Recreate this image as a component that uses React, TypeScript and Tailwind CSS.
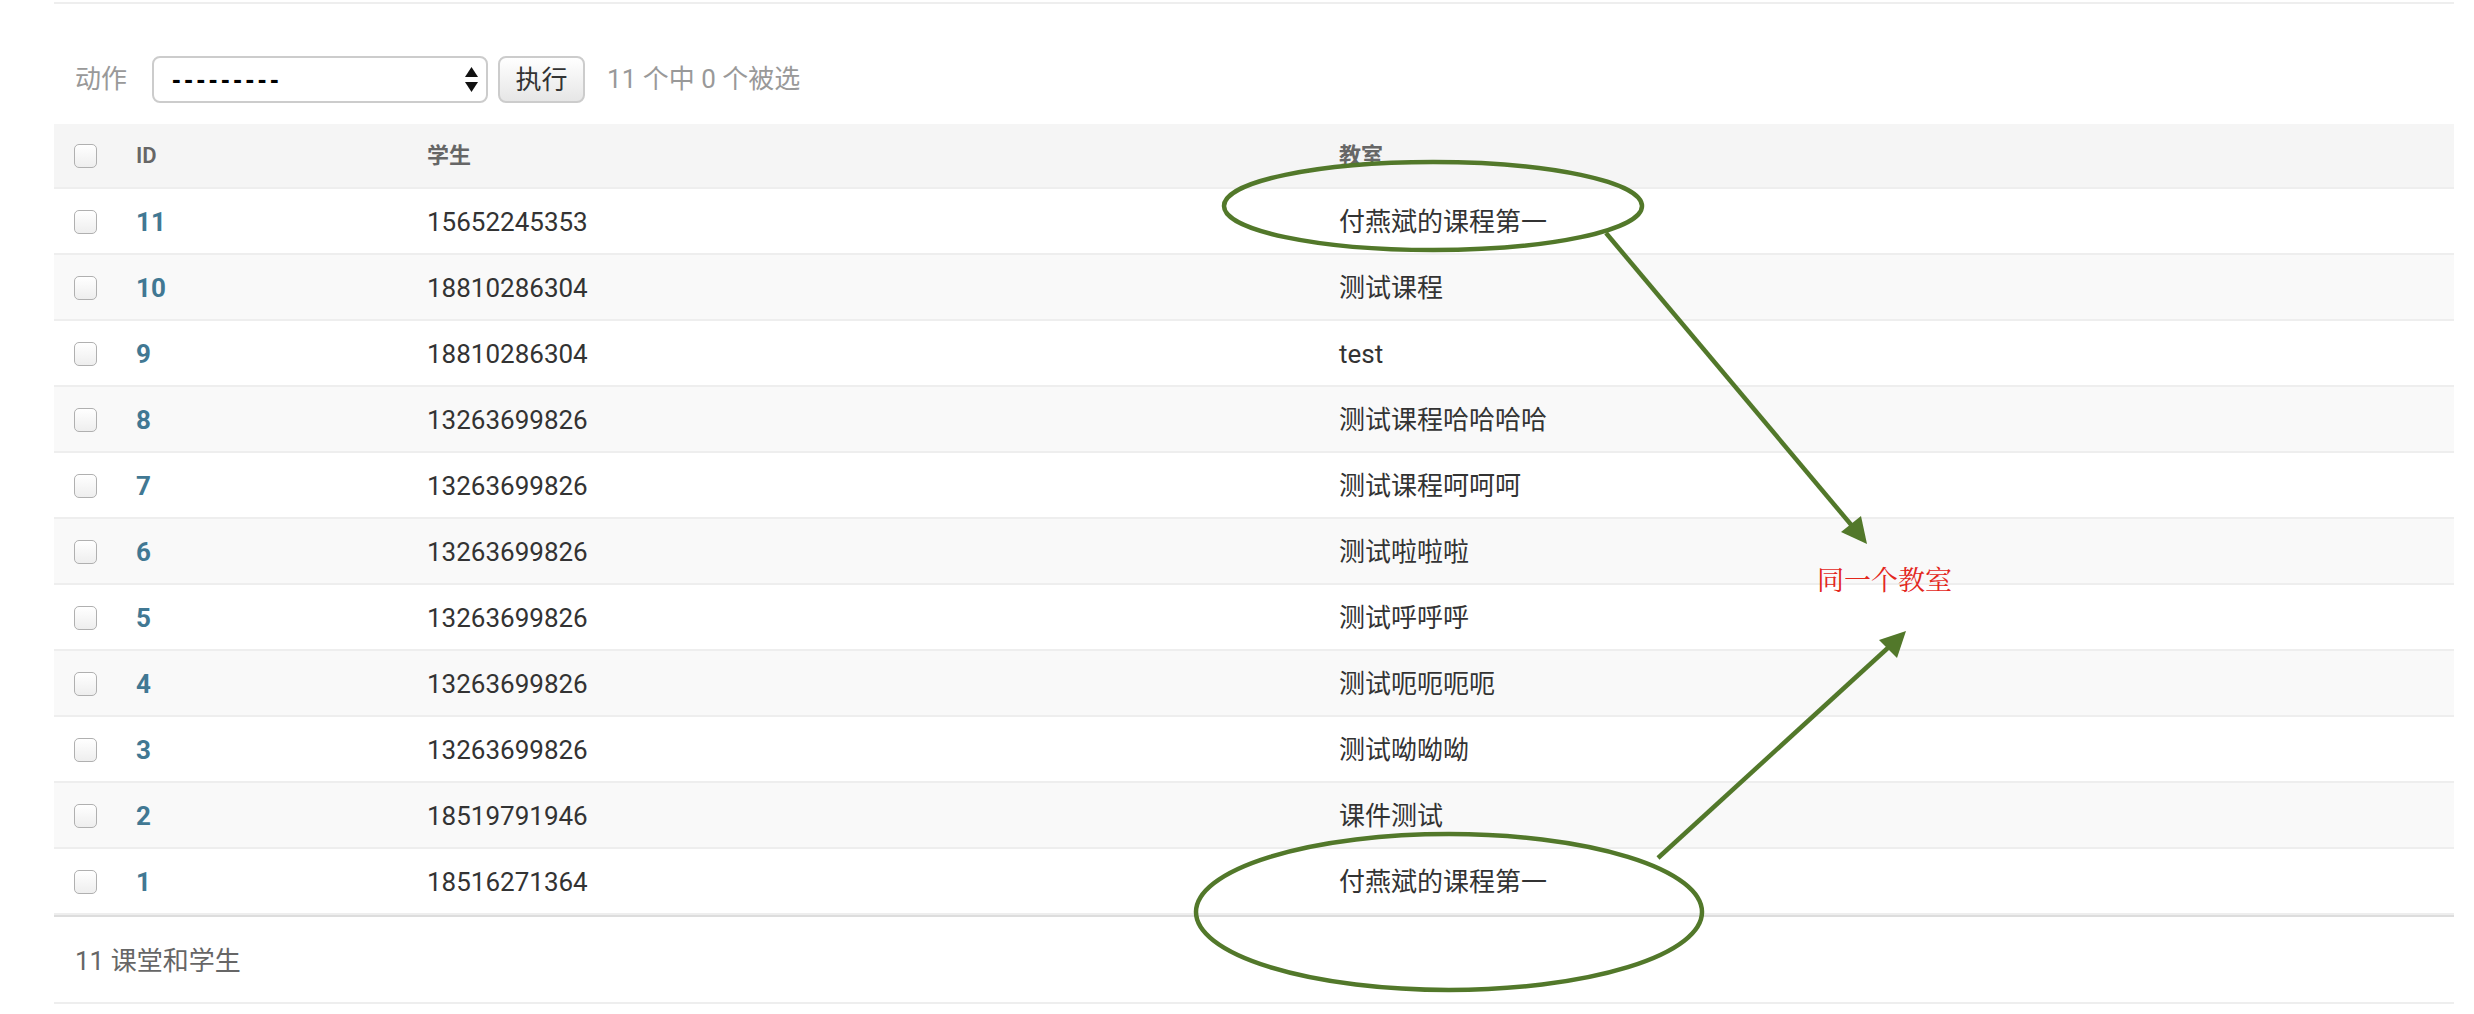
import React from 'react';

const rows: [number, string, string][] = [
  [11, '15652245353', '付燕斌的课程第一'],
  [10, '18810286304', '测试课程'],
  [9, '18810286304', 'test'],
  [8, '13263699826', '测试课程哈哈哈哈'],
  [7, '13263699826', '测试课程呵呵呵'],
  [6, '13263699826', '测试啦啦啦'],
  [5, '13263699826', '测试呼呼呼'],
  [4, '13263699826', '测试呃呃呃呃'],
  [3, '13263699826', '测试呦呦呦'],
  [2, '18519791946', '课件测试'],
  [1, '18516271364', '付燕斌的课程第一'],
];

const Checkbox: React.FC = () => (
  <span className="block w-[23px] h-[24px] rounded-[5px] border border-[#b0b0b0] bg-linear-to-b from-white to-[#eeeeee]" />
);

const Annotations: React.FC = () => (
  <>
    <svg className="absolute left-0 top-0 pointer-events-none" width="2474" height="1014" viewBox="0 0 2474 1014">
      <g fill="none" stroke="#52782a" strokeWidth="4.5">
        <ellipse cx="1433" cy="206" rx="209" ry="44" />
        <ellipse cx="1449" cy="912" rx="253" ry="78" />
        <line x1="1606" y1="233" x2="1853" y2="527" />
        <line x1="1658" y1="858" x2="1890" y2="646" />
      </g>
      <g fill="#52782a">
        <polygon points="1867,544 1841,532 1861,516" />
        <polygon points="1906,631 1897,658 1879,640" />
      </g>
    </svg>
    <div className="absolute left-[1817px] top-[565px] text-[27px] leading-none text-[#e3271c] font-['Noto_Serif_CJK_SC','Noto_Sans_CJK_SC',serif]">
      同一个教室
    </div>
  </>
);

const App: React.FC = () => {
  return (
    <div className="relative w-[2474px] h-[1014px] overflow-hidden bg-white text-[#333] font-['Roboto','Noto_Sans_CJK_SC',sans-serif]">
      <div className="pl-[54px] pr-[20px]">
        <div className="mt-[2px] h-[2px] bg-[#eeeeee]" />

        {/* actions */}
        <div className="mt-[52px] h-[47px] flex items-center text-[26px]">
          <span className="ml-[21px] text-[#999]">动作</span>
          <div className="ml-[25px] w-[336px] h-[47px] rounded-[8px] border-2 border-[#cccccc] bg-white flex items-center justify-between pl-[18px] pr-[8px]">
            <span className="text-black tracking-[3.6px] font-['Liberation_Sans',sans-serif] font-bold">---------</span>
            <svg width="13" height="25" viewBox="0 0 13 25">
              <polygon points="6.5,0 13,10 0,10" fill="#111" />
              <polygon points="0,15 13,15 6.5,25" fill="#111" />
            </svg>
          </div>
          <button className="ml-[10px] w-[87px] h-[47px] rounded-[8px] border-2 border-[#cccccc] bg-linear-to-b from-white to-[#e6e6e6] text-[#333] text-[26px] leading-none">
            执行
          </button>
          <span className="ml-[22px] text-[#999]">11 个中 0 个被选</span>
        </div>

        {/* table */}
        <div className="mt-[21px]">
          <div className="grid grid-cols-[66px_291px_912px_1fr] h-[65px] items-center bg-[#f5f5f5] border-b-2 border-[#eeeeee] text-[22px] font-semibold text-[#666]">
            <div className="pl-[20px]"><Checkbox /></div>
            <div className="pl-[16px]">ID</div>
            <div className="pl-[16px]">学生</div>
            <div className="pl-[16px]">教室</div>
          </div>
          {rows.map(([id, student, room], i) => (
            <div
              key={id}
              className={`grid grid-cols-[66px_291px_912px_1fr] h-[66px] pt-[2px] items-center border-b-2 border-[#eeeeee] text-[26px] ${i % 2 === 1 ? 'bg-[#f9f9f9]' : 'bg-white'}`}
            >
              <div className="pl-[20px]"><Checkbox /></div>
              <div className="pl-[16px] font-bold text-[#417893]">{id}</div>
              <div className="pl-[16px]">{student}</div>
              <div className="pl-[16px]">{room}</div>
            </div>
          ))}
          <div className="h-[89px] border-t-2 border-b-2 border-t-[#dddddd] border-b-[#eeeeee] flex items-center pt-[4px] pl-[21px] text-[26px] text-[#666]">
            11 课堂和学生
          </div>
        </div>
      </div>
      <Annotations />
    </div>
  );
};

export default App;
